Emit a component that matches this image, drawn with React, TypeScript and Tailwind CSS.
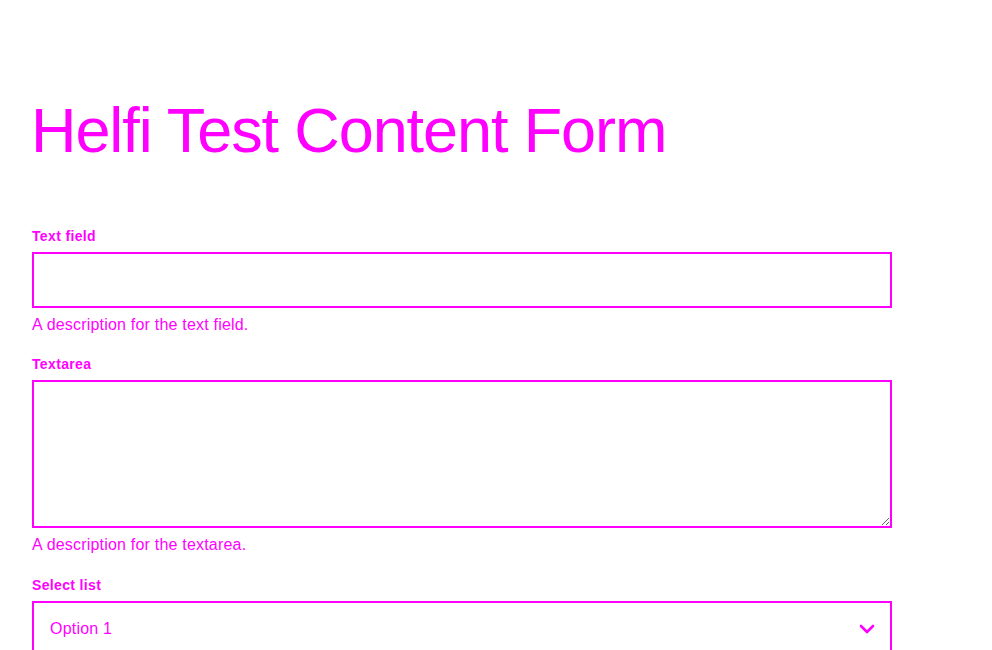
const MAGENTA = "text-[#ff00ff]";

function Label({ children, htmlFor }: { children: React.ReactNode; htmlFor: string }) {
  return (
    <label htmlFor={htmlFor} className="block text-[14px] leading-5 font-bold tracking-[0.35px] mb-[6px]">
      {children}
    </label>
  );
}

function Description({ children }: { children: React.ReactNode }) {
  return <div className="text-[16px] leading-6 tracking-[0.2px] mt-[5px]">{children}</div>;
}

export default function App() {
  return (
    <div
      className={`min-h-[650px] bg-white ${MAGENTA} px-8 pt-[99px]`}
      style={{ fontFamily: '"Liberation Sans", Arial, sans-serif' }}
    >
      <h1 className="text-[63px] leading-none font-normal tracking-[-1.1px] -ml-[1px] mb-[64px]">
        Helfi Test Content Form
      </h1>

      <form className="w-[860px]">
        {/* text field */}
        <div className="mb-[17px]">
          <Label htmlFor="text-field">Text field</Label>
          <input
            id="text-field"
            type="text"
            className="block w-full h-[56px] border-2 border-[#ff00ff] bg-white px-4 outline-none"
          />
          <Description>A description for the text field.</Description>
        </div>

        {/* textarea */}
        <div className="mb-[18px]">
          <Label htmlFor="textarea">Textarea</Label>
          <textarea
            id="textarea"
            className="block w-full h-[148px] border-2 border-[#ff00ff] bg-white px-4 py-3 outline-none resize-y"
          />
          <Description>A description for the textarea.</Description>
        </div>

        {/* select */}
        <div>
          <Label htmlFor="select-list">Select list</Label>
          <div className="relative">
            <select
              id="select-list"
              className="block w-full h-[56px] appearance-none border-2 border-[#ff00ff] bg-white pl-4 pr-12 text-[16px] tracking-[0.2px] outline-none"
            >
              <option>Option 1</option>
              <option>Option 2</option>
            </select>
            <svg
              className="pointer-events-none absolute right-[17px] top-[23px]"
              width="16"
              height="10"
              viewBox="0 0 16 10"
              fill="none"
            >
              <path d="M2 2l6 6 6-6" stroke="#ff00ff" strokeWidth="2.6" strokeLinecap="round" strokeLinejoin="round" />
            </svg>
          </div>
        </div>
      </form>
    </div>
  );
}
